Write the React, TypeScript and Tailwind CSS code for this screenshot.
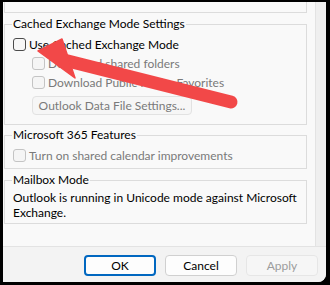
import React from "react";

const font = { fontFamily: 'Lato, "Noto Sans", Arial, sans-serif' };

function Box({ disabled }: { disabled?: boolean }) {
  return (
    <span
      className={
        "w-[13px] h-[13px] shrink-0 rounded-[3px] border " +
        (disabled ? "border-[#c4c4c4] bg-[#f5f5f5]" : "border-[#4b4b4b] bg-[#f7f7f7]")
      }
    />
  );
}

function Check({ label, disabled, indent }: { label: string; disabled?: boolean; indent?: boolean }) {
  return (
    <div className={"flex items-center h-[19px] gap-[3px] " + (indent ? "pl-[27px]" : "pl-[8px]")}>
      <Box disabled={disabled} />
      <span className={disabled ? "text-[#7a7a7a]" : "text-black"}>{label}</span>
    </div>
  );
}

export default function App() {
  return (
    <div className="w-[330px] h-[285px] bg-black pl-[3px] pt-[2px] overflow-hidden relative" style={font}>
      <div className="w-[323px] h-[280px] bg-[#efefef] rounded-br-[8px] flex flex-col overflow-hidden text-[12px] leading-[16px]">
        <div className="w-[313px] h-[244px] bg-[#f9f9f9] border-r border-[#e3e3e3] pl-[1px] pr-[8px] flex flex-col">
          <div className="h-[11px] border-x border-b border-[#dcdcdc]" />
          <fieldset className="mt-[3px] border border-[#dcdcdc] pb-[9px]">
            <legend className="ml-[7px] px-[1px] text-black">Cached Exchange Mode Settings</legend>
            <div className="pt-[3px]">
              <Check label="Use Cached Exchange Mode" />
              <Check label="Download shared folders" disabled indent />
              <Check label="Download Public Folder Favorites" disabled indent />
              <div className="pl-[27px] mt-[4px]">
                <div className="w-[160px] h-[19px] rounded-[4px] border border-[#e2e2e2] bg-[#f6f6f6] text-[#7a7a7a] flex items-center justify-center">
                  Outlook Data File Settings...
                </div>
              </div>
            </div>
          </fieldset>
          <fieldset className="mt-[2px] border border-[#dcdcdc] pb-[3px]">
            <legend className="ml-[7px] px-[1px] text-black">Microsoft 365 Features</legend>
            <div className="pt-[3px]">
              <Check label="Turn on shared calendar improvements" disabled />
            </div>
          </fieldset>
          <fieldset className="mt-[3px] border border-[#dcdcdc] pb-[3px]">
            <legend className="ml-[7px] px-[1px] text-black">Mailbox Mode</legend>
            <div className="pt-[2px] pl-[8px] pr-[8px] leading-[15px] text-black">
              Outlook is running in Unicode mode against Microsoft Exchange.
            </div>
          </fieldset>
        </div>
        <div className="flex-1 border-t border-[#e3e3e3] bg-[#f3f3f3] flex justify-end items-start pt-[8px] pr-[8px] gap-[9px]">
          <div className="w-[72px] h-[21px] rounded-[4px] border-2 border-[#0067c0] bg-[#fdfdfd] flex items-center justify-center text-black">
            OK
          </div>
          <div className="w-[72px] h-[21px] rounded-[4px] border border-[#d0d0d0] bg-[#fdfdfd] flex items-center justify-center text-black">
            Cancel
          </div>
          <div className="w-[72px] h-[21px] rounded-[4px] border border-[#e6e6e6] bg-[#f6f6f6] flex items-center justify-center text-[#9c9c9c]">
            Apply
          </div>
        </div>
      </div>
      <svg className="absolute left-0 top-0 pointer-events-none" width="330" height="285" viewBox="0 0 330 285">
        <line x1="231" y1="102" x2="64" y2="60" stroke="#f24848" strokeWidth="13" strokeLinecap="round" />
        <polygon points="38,51 62,39 75,78" fill="#f24848" stroke="#f24848" strokeWidth="1.5" strokeLinejoin="round" />
      </svg>
    </div>
  );
}
